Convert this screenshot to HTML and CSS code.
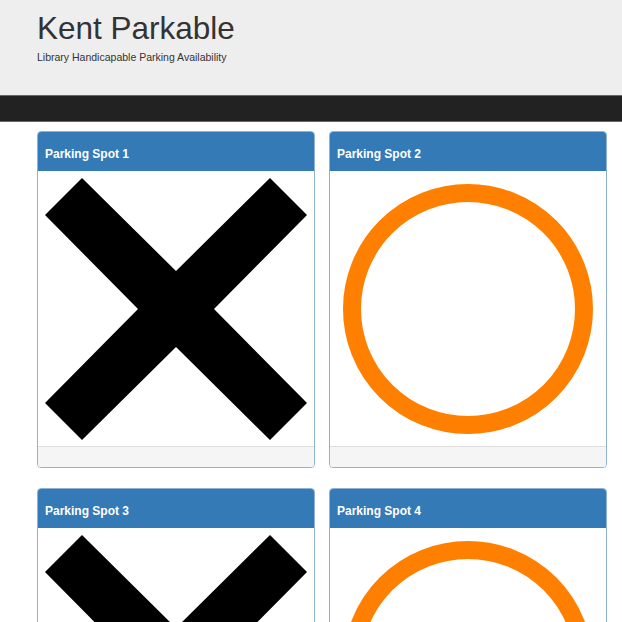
FILE: index.html
```html
<!DOCTYPE html>
<html>
<head>
  <meta charset="UTF-8" />
  <meta name="viewport" content="width=device-width, initial-scale=1" />
  <title>Kent Parkable</title>
  <link rel="stylesheet" href="styles.css">
</head>
<body>
  <header class="jumbotron">
    <h1>Kent Parkable</h1>
    <p>Library Handicapable Parking Availability</p>
  </header>
  <nav class="navbar"></nav>

  <main class="spots">
    <section class="panel">
      <h3 class="panel-heading">Parking Spot 1</h3>
      <div class="panel-body">
        <svg viewBox="0 0 262 262" class="taken">
          <polygon points="37,0 131,93 225,0 262,37 169,131 262,225 225,262 131,169 37,262 0,225 93,131 0,37" />
        </svg>
      </div>
      <div class="panel-footer"></div>
    </section>
    <section class="panel">
      <h3 class="panel-heading">Parking Spot 2</h3>
      <div class="panel-body">
        <svg viewBox="0 0 262 262" class="free">
          <circle cx="131" cy="131" r="116" />
        </svg>
      </div>
      <div class="panel-footer"></div>
    </section>
    <section class="panel">
      <h3 class="panel-heading">Parking Spot 3</h3>
      <div class="panel-body">
        <svg viewBox="0 0 262 262" class="taken">
          <polygon points="37,0 131,93 225,0 262,37 169,131 262,225 225,262 131,169 37,262 0,225 93,131 0,37" />
        </svg>
      </div>
      <div class="panel-footer"></div>
    </section>
    <section class="panel">
      <h3 class="panel-heading">Parking Spot 4</h3>
      <div class="panel-body">
        <svg viewBox="0 0 262 262" class="free">
          <circle cx="131" cy="131" r="116" />
        </svg>
      </div>
      <div class="panel-footer"></div>
    </section>
  </main>
</body>
</html>
```

FILE: styles.css
```css
* {
  box-sizing: border-box;
}
body {
  margin: 0;
  font-family: "Liberation Sans", Arial, sans-serif;
  color: #333;
  background: #fff;
}
.jumbotron {
  background: #eee;
  height: 95px;
  padding: 12px 37px 0;
}
.jumbotron h1 {
  margin: 0;
  font-size: 31.5px;
  font-weight: normal;
  line-height: 32px;
}
.jumbotron p {
  margin: 7px 0 0;
  font-size: 10.5px;
  line-height: 13px;
}
.navbar {
  height: 27px;
  background: #222;
  border-top: 1px solid #666;
  border-bottom: 1px solid #666;
}
.spots {
  display: grid;
  grid-template-columns: 278px 278px;
  column-gap: 14px;
  row-gap: 20px;
  padding: 9px 37px 0;
}
.panel {
  border: 1px solid #8eb1d4;
  border-radius: 4px;
  overflow: hidden;
}
.panel-heading {
  margin: 0;
  background: #337ab7;
  color: #fff;
  font-size: 12px;
  font-weight: bold;
  line-height: 14px;
  padding: 15px 7px 9px;
  border-bottom: 1px solid #337ab7;
}
.panel-body {
  background: #fff;
  padding: 7px 7px 6px;
  display: flex;
  justify-content: center;
}
.panel-body svg {
  width: 262px;
  height: 262px;
  display: block;
}
.taken polygon {
  fill: #000;
}
.free circle {
  fill: none;
  stroke: #ff8000;
  stroke-width: 18;
}
.panel-footer {
  height: 21px;
  background: #f5f5f5;
  border-top: 1px solid #ddd;
}
```
